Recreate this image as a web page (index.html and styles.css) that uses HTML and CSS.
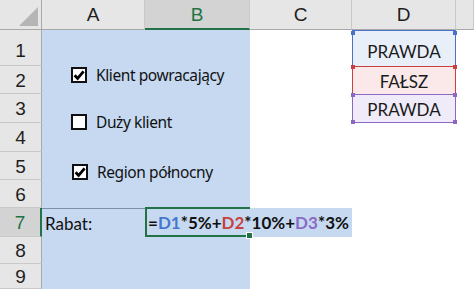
FILE: index.html
```html
<!DOCTYPE html>
<html lang="pl">
<head>
    <meta charset="UTF-8">
    <title>Arkusz - Rabat</title>
    <link rel="stylesheet" href="styles.css">
</head>
<body>
    <div class="sheet">
        <!-- column headers -->
        <div class="colhead corner"><span class="tri"></span></div>
        <div class="colhead">A</div>
        <div class="colhead active">B</div>
        <div class="colhead">C</div>
        <div class="colhead">D</div>
        <div class="colhead"></div>

        <!-- row headers -->
        <div class="rowhead r1">1</div>
        <div class="rowhead r2">2</div>
        <div class="rowhead r3">3</div>
        <div class="rowhead r4">4</div>
        <div class="rowhead r5">5</div>
        <div class="rowhead r6">6</div>
        <div class="rowhead r7 active">7</div>
        <div class="rowhead r8">8</div>
        <div class="rowhead r9">9</div>

        <!-- A1:B6 with the check boxes -->
        <div class="blue top-block">
            <label class="cb">
                <span class="box">
                    <svg viewBox="0 0 16 16" width="16" height="16"><path d="M3.6 8.2 L6.6 11.4 L12.6 4.4" /></svg>
                </span>
                Klient powracający
            </label>
            <label class="cb">
                <span class="box"></span>
                Duży klient
            </label>
            <label class="cb lower">
                <span class="box">
                    <svg viewBox="0 0 16 16" width="16" height="16"><path d="M3.6 8.2 L6.6 11.4 L12.6 4.4" /></svg>
                </span>
                Region północny
            </label>
        </div>

        <!-- D1:D3 referenced cells -->
        <div class="ref ref-blue">PRAWDA</div>
        <div class="ref ref-red">FAŁSZ</div>
        <div class="ref ref-purple">
            PRAWDA
            <span class="dot bl"></span>
            <span class="dot br"></span>
        </div>

        <!-- row 7 -->
        <div class="blue a7">Rabat:</div>
        <div class="blue b7">
            <span class="formula">=<span class="c-blue">D1</span>*5%+<span class="c-red">D2</span>*10%+<span class="c-purple">D3</span>*3%</span>
            <span class="handle"></span>
        </div>
        <div class="blue c7"></div>

        <!-- A8:B9 -->
        <div class="blue bottom-block"></div>
    </div>
</body>
</html>
```

FILE: styles.css
```css
body {
    margin: 0;
    background: #fff;
    overflow: hidden;
}

.sheet {
    display: grid;
    grid-template-columns: 42px 103px 105px 102px 104px 1fr;
    grid-template-rows: 30px 36px 28px 29px 29px 28px 28px 29px 27px 25px;
    width: 474px;
    height: 289px;
    font-family: "Liberation Sans", Arial, sans-serif;
}

/* headers */
.colhead {
    background: #e6e6e6;
    border-right: 1px solid #c9c9c9;
    border-bottom: 1px solid #a9a9a9;
    display: flex;
    justify-content: center;
    align-items: flex-end;
    padding-bottom: 3px;
    font-size: 19px;
    color: #1e1e1e;
    box-sizing: border-box;
}

.colhead.active {
    background: #d3d3d3;
    color: #217346;
    border-bottom: 2px solid #217346;
    padding-bottom: 2px;
}

.corner {
    position: relative;
    border-right: 1px solid #a9a9a9;
}

.tri {
    position: absolute;
    right: 3px;
    bottom: 3px;
    width: 0;
    height: 0;
    border-left: 19px solid transparent;
    border-bottom: 19px solid #b5b5b5;
}

.rowhead {
    grid-column: 1;
    background: #e6e6e6;
    border-right: 1px solid #a9a9a9;
    border-bottom: 1px solid #c9c9c9;
    box-sizing: border-box;
    display: flex;
    justify-content: center;
    align-items: center;
    font-size: 19px;
    color: #1e1e1e;
    padding-top: 2px;
}

.rowhead.r1 { grid-row: 2; padding-top: 7px; }
.rowhead.r2 { grid-row: 3; }
.rowhead.r3 { grid-row: 4; }
.rowhead.r4 { grid-row: 5; }
.rowhead.r5 { grid-row: 6; }
.rowhead.r6 { grid-row: 7; }
.rowhead.r7 { grid-row: 8; }
.rowhead.r8 { grid-row: 9; }
.rowhead.r9 { grid-row: 10; }

.rowhead.active {
    background: #d3d3d3;
    color: #217346;
    border-right: 2px solid #217346;
}

/* cells */
.blue {
    background: #c6d9f1;
}

.top-block {
    grid-column: 2 / 4;
    grid-row: 2 / 8;
    display: flex;
    flex-direction: column;
    gap: 31px;
    padding: 37px 0 0 29px;
    font-family: "Noto Sans", "Segoe UI", sans-serif;
    font-size: 15.5px;
    letter-spacing: -0.4px;
    color: #111;
}

.cb {
    display: flex;
    align-items: center;
    gap: 9px;
    height: 16px;
}

.cb.lower {
    margin-top: 3px;
    margin-left: 1px;
}

.box {
    width: 16px;
    height: 16px;
    box-sizing: border-box;
    border: 2px solid #111;
    background: #fff;
    position: relative;
}

.box svg {
    position: absolute;
    left: -2px;
    top: -2px;
}

.box path {
    fill: none;
    stroke: #000;
    stroke-width: 2.8;
}

.bottom-block {
    grid-column: 2 / 4;
    grid-row: 9 / 11;
}

.ref {
    grid-column: 5;
    position: relative;
    box-sizing: border-box;
    display: flex;
    justify-content: center;
    align-items: center;
    font-family: Lato, "Noto Sans", sans-serif;
    font-size: 17px;
    color: #1a1a1a;
    padding-top: 2px;
}

.ref::before,
.ref::after,
.dot {
    content: "";
    position: absolute;
    top: -2px;
    width: 4px;
    height: 4px;
}

.ref::before { left: -2px; }
.ref::after { right: -2px; }

.ref-blue {
    grid-row: 2;
    background: #e9eff9;
    border: 1px solid #4a72c8;
    border-bottom: none;
    padding-top: 6px;
}
.ref-blue::before, .ref-blue::after { background: #4a72c8; top: 0; }

.ref-red {
    grid-row: 3;
    background: #fbe8e9;
    border: 1px solid #c94040;
    border-bottom: none;
}
.ref-red::before, .ref-red::after { background: #c94040; }

.ref-purple {
    grid-row: 4;
    background: #efebf8;
    border: 1px solid #8a68c4;
}
.ref-purple::before, .ref-purple::after, .dot { background: #8a68c4; }

.dot.bl { top: auto; bottom: -2px; left: -2px; }
.dot.br { top: auto; bottom: -2px; right: -2px; }

.a7 {
    grid-column: 2;
    grid-row: 8;
    border-top: 1px solid #7d8fa6;
    font-family: Lato, "Noto Sans", sans-serif;
    font-size: 17px;
    color: #111;
    display: flex;
    align-items: center;
    padding-left: 3px;
}

.b7 {
    grid-column: 3;
    grid-row: 8;
    position: relative;
    z-index: 2;
    border: 2px solid #217346;
    border-right: none;
    box-sizing: border-box;
    margin-top: -1px;
    display: flex;
    align-items: center;
    padding-left: 1px;
    white-space: nowrap;
}

.formula {
    font-family: Lato, "Noto Sans", sans-serif;
    font-weight: bold;
    font-size: 17px;
    color: #111;
}

.c-blue { color: #4677cf; }
.c-red { color: #c8403f; }
.c-purple { color: #8a6cc4; }

.handle {
    position: absolute;
    right: -3px;
    bottom: -4px;
    width: 5px;
    height: 5px;
    background: #217346;
    border: 1px solid #fff;
}

.c7 {
    grid-column: 4;
    grid-row: 8;
}
```
